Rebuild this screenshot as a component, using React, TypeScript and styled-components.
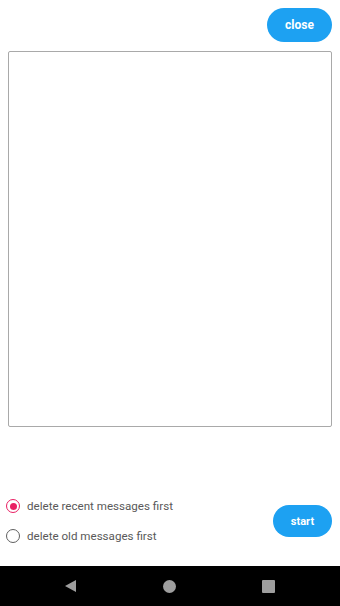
import React, { useState } from "react";
import styled, { createGlobalStyle } from "styled-components";

const Global = createGlobalStyle`
  html, body { margin: 0; padding: 0; background: #fff; }
  body { font-family: Roboto, "Noto Sans", sans-serif; }
  * { box-sizing: border-box; }
`;

const Page = styled.div`
  width: 340px;
  height: 606px;
  display: flex;
  flex-direction: column;
  overflow: hidden;
  background: #fff;
`;

const Content = styled.div`
  flex: 1;
  display: flex;
  flex-direction: column;
`;

const TopBar = styled.div`
  display: flex;
  justify-content: flex-end;
  padding: 8px 8px 0 8px;
`;

const PillButton = styled.button<{ $w: number; $h: number; $fs: number }>`
  width: ${(p) => p.$w}px;
  height: ${(p) => p.$h}px;
  border: none;
  border-radius: ${(p) => p.$h / 2}px;
  background: #1da1f2;
  color: #fff;
  font-family: Roboto, "Noto Sans", sans-serif;
  font-weight: 700;
  font-size: ${(p) => p.$fs}px;
  padding: 0;
  cursor: pointer;
`;

const LogBox = styled.div`
  margin: 9px 8px 0 8px;
  height: 376px;
  border: 1px solid #a9a9a9;
  border-radius: 2px;
`;

const Spacer = styled.div`
  flex: 1;
`;

const Footer = styled.div`
  height: 60px;
  margin-bottom: 15px;
  padding: 0 8px 0 6px;
  display: flex;
  align-items: center;
  justify-content: space-between;
`;

const RadioGroup = styled.div`
  display: flex;
  flex-direction: column;
`;

const RadioRow = styled.label`
  height: 30px;
  display: flex;
  align-items: center;
  gap: 7px;
  cursor: pointer;
`;

const RadioCircle = styled.span<{ $checked: boolean }>`
  width: 14px;
  height: 14px;
  border-radius: 50%;
  border: 1.5px solid ${(p) => (p.$checked ? "#e91e63" : "#5f5f5f")};
  display: flex;
  align-items: center;
  justify-content: center;
  &::after {
    content: "";
    width: 7px;
    height: 7px;
    border-radius: 50%;
    background: #e91e63;
    display: ${(p) => (p.$checked ? "block" : "none")};
  }
`;

const RadioText = styled.span`
  font-size: 11.6px;
  color: #595959;
  font-family: Roboto, "Noto Sans", sans-serif;
`;

const NavBar = styled.div`
  height: 40px;
  background: #000;
  display: flex;
  align-items: center;
  justify-content: space-between;
  padding: 0 65px 0 64px;
`;

const NavCircle = styled.span`
  width: 13px;
  height: 13px;
  border-radius: 50%;
  background: #9e9e9e;
`;

const NavSquare = styled.span`
  width: 13px;
  height: 13px;
  border-radius: 1px;
  background: #9e9e9e;
`;

export default function App() {
  const [mode, setMode] = useState<"recent" | "old">("recent");
  return (
    <>
      <Global />
      <Page>
        <Content>
          <TopBar>
            <PillButton $w={65} $h={34} $fs={12}>close</PillButton>
          </TopBar>
          <LogBox />
          <Spacer />
          <Footer>
            <RadioGroup>
              <RadioRow onClick={() => setMode("recent")}>
                <RadioCircle $checked={mode === "recent"} />
                <RadioText>delete recent messages first</RadioText>
              </RadioRow>
              <RadioRow onClick={() => setMode("old")}>
                <RadioCircle $checked={mode === "old"} />
                <RadioText>delete old messages first</RadioText>
              </RadioRow>
            </RadioGroup>
            <PillButton $w={59} $h={32} $fs={11}>start</PillButton>
          </Footer>
        </Content>
        <NavBar>
          <svg width="13" height="14" viewBox="0 0 13 14">
            <path d="M12 1 L1 7 L12 13 Z" fill="#9e9e9e" />
          </svg>
          <NavCircle />
          <NavSquare />
        </NavBar>
      </Page>
    </>
  );
}
